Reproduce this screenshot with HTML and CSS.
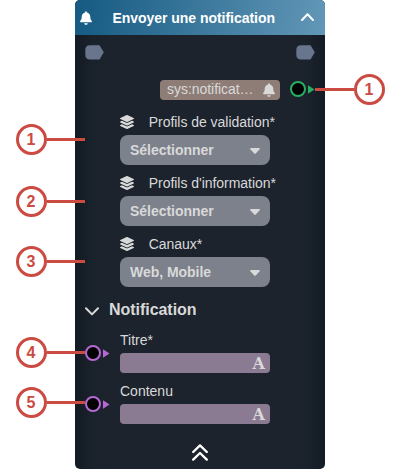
FILE: index.html
```html
<!DOCTYPE html>
<html lang="fr">
<head>
<meta charset="utf-8">
<title>Envoyer une notification</title>
<link rel="stylesheet" href="styles.css">
</head>
<body>
<svg class="defs" width="0" height="0" aria-hidden="true">
  <symbol id="bell" viewBox="0 0 448 512"><path d="M224 512c35.32 0 63.97-28.65 63.97-64H160.03c0 35.35 28.65 64 63.97 64zm215.39-149.71c-19.32-20.76-55.47-51.99-55.47-154.29 0-77.7-54.48-139.9-127.94-155.16V32c0-17.67-14.32-32-31.98-32s-31.98 14.33-31.98 32v20.84C118.56 68.1 64.08 130.3 64.08 208c0 102.3-36.15 133.53-55.47 154.29-6 6.45-8.66 14.16-8.61 21.71.11 16.4 12.98 32 32.1 32h383.8c19.12 0 32-15.6 32.1-32 .05-7.55-2.61-15.27-8.61-21.71z"/></symbol>
  <symbol id="layers" viewBox="0 0 512 512"><path d="M12.41 148.02l232.94 105.67c6.8 3.09 14.49 3.09 21.29 0l232.94-105.67c16.55-7.51 16.55-32.52 0-40.03L266.65 2.31a25.607 25.607 0 0 0-21.29 0L12.41 107.98c-16.55 7.51-16.55 32.53 0 40.04zm487.18 88.28l-58.09-26.33-161.64 73.27c-7.56 3.43-15.59 5.17-23.86 5.17s-16.29-1.74-23.86-5.17L70.51 209.97l-58.1 26.33c-16.55 7.5-16.55 32.5 0 40l232.94 105.59c6.8 3.08 14.49 3.08 21.29 0L499.59 276.3c16.55-7.5 16.55-32.5 0-40zm0 127.8l-57.87-26.23-161.86 73.37c-7.56 3.43-15.59 5.17-23.86 5.17s-16.29-1.74-23.86-5.17L70.29 337.87 12.41 364.1c-16.55 7.5-16.55 32.5 0 40l232.94 105.59c6.8 3.08 14.49 3.08 21.29 0L499.59 404.1c16.55-7.5 16.55-32.5 0-40z"/></symbol>
  <symbol id="flow" viewBox="0 0 19 15"><path d="M5 0.3H14.5L18.8 7.2L14.5 14.5H5Q.3 14.5 .3 9.8V5Q.3 .3 5 .3Z"/></symbol>
  <symbol id="pin" viewBox="0 0 25 16"><circle class="pin-ring" cx="8" cy="8" r="7"/><path d="M18 4.3L24.5 8.5L18 12.7Z"/></symbol>
  <symbol id="caret" viewBox="0 0 10 6"><path d="M.8 0H9.2Q10.4 .3 9.6 1.3L5.8 5.5Q5 6.2 4.2 5.5L.4 1.3Q-.4 .3 .8 0Z"/></symbol>
</svg>

<main class="stage">
  <section class="node">
    <header class="node-header">
      <svg class="header-bell"><use href="#bell"/></svg>
      <h1>Envoyer une notification</h1>
      <svg class="header-chevron" viewBox="0 0 13 8"><path d="M1 7L6.5 1.3L12 7"/></svg>
    </header>

    <div class="flow-row">
      <svg class="flow"><use href="#flow"/></svg>
      <svg class="flow"><use href="#flow"/></svg>
    </div>

    <div class="output-row">
      <div class="output"><span>sys:notificat…</span><svg class="output-bell"><use href="#bell"/></svg></div>
      <svg class="pin pin-out"><use href="#pin"/></svg>
    </div>

    <div class="selects">
      <div class="field">
        <div class="field-label"><svg class="layers"><use href="#layers"/></svg>Profils de validation*</div>
        <div class="select">Sélectionner<svg class="caret"><use href="#caret"/></svg></div>
      </div>
      <div class="field">
        <div class="field-label"><svg class="layers"><use href="#layers"/></svg>Profils d'information*</div>
        <div class="select">Sélectionner<svg class="caret"><use href="#caret"/></svg></div>
      </div>
      <div class="field">
        <div class="field-label"><svg class="layers"><use href="#layers"/></svg>Canaux*</div>
        <div class="select">Web, Mobile<svg class="caret"><use href="#caret"/></svg></div>
      </div>
    </div>

    <div class="section-title">
      <svg class="section-chevron" viewBox="0 0 14 9"><path d="M1 1.2L7 7.4L13 1.2"/></svg>
      <h2>Notification</h2>
    </div>

    <div class="inputs">
      <div class="text-field">
        <label>Titre*</label>
        <div class="input-row"><svg class="pin pin-in"><use href="#pin"/></svg><div class="input">A</div></div>
      </div>
      <div class="text-field">
        <label>Contenu</label>
        <div class="input-row"><svg class="pin pin-in"><use href="#pin"/></svg><div class="input">A</div></div>
      </div>
    </div>

    <svg class="collapse" viewBox="0 0 16 17"><path d="M1.2 8L8 1.4L14.8 8M1.2 15.6L8 9L14.8 15.6"/></svg>
  </section>

  <div class="callout callout-1"><b>1</b><i></i></div>
  <div class="callout callout-2"><b>2</b><i></i></div>
  <div class="callout callout-3"><b>3</b><i></i></div>
  <div class="callout callout-4"><b>4</b><i></i></div>
  <div class="callout callout-5"><b>5</b><i></i></div>
  <div class="callout callout-out"><i></i><b>1</b></div>
</main>
</body>
</html>
```

FILE: styles.css
```css
* { box-sizing: border-box; }

body {
  margin: 0;
  background: #fff;
  font-family: "Liberation Sans", Arial, sans-serif;
  font-size: 14px;
  color: #d9d9d9;
}

svg { display: block; flex: none; fill: currentColor; }
.defs { position: absolute; }

.stage {
  position: relative;
  width: 400px;
  height: 469px;
  overflow: hidden;
}

.node {
  width: 250px;
  height: 469px;
  margin-left: 75px;
  border-radius: 5px;
  overflow: hidden;
  background: linear-gradient(90deg, #131a22 0, #1a222c 18px, #1c232d 36px, #1c232d 214px, #1a222c 232px, #141b24 100%);
}

.node-header {
  display: flex;
  align-items: center;
  height: 35px;
  padding: 0 11px 0 5px;
  color: #fff;
  background: linear-gradient(100deg, #155a82, #6297b7);
}
.header-bell { width: 12px; height: 14px; margin-top: 1px; }
.node-header h1 {
  flex: 1;
  margin: 0 0 0 20.4px;
  font-size: 14px;
  line-height: 16px;
  letter-spacing: -.03px;
  white-space: nowrap;
}
.header-chevron { width: 13px; height: 8px; margin-top: -1px; }
.header-chevron path,
.section-chevron path,
.collapse path {
  fill: none;
  stroke: currentColor;
  stroke-width: 2;
  stroke-linecap: round;
  stroke-linejoin: round;
}

.flow-row {
  display: flex;
  justify-content: space-between;
  padding: 10px 10px 0;
  color: #69748d;
}
.flow { width: 19px; height: 15px; }

.output-row {
  display: flex;
  align-items: center;
  justify-content: flex-end;
  gap: 10px;
  height: 20px;
  margin-top: 20px;
  padding-right: 10px;
}
.output {
  display: flex;
  align-items: center;
  justify-content: space-between;
  width: 120px;
  height: 20px;
  padding: 0 5px 0 7px;
  border-radius: 4px;
  background: #8e7d76;
}
.output span { line-height: 18px; padding-bottom: 2px; letter-spacing: -.04px; }
.output-bell { width: 12px; height: 14px; }

.pin { width: 25px; height: 16px; margin-top: -2px; }
.pin-ring { fill: #000; stroke: currentColor; stroke-width: 2; }
.pin-out { color: #27ae60; }
.pin-in { color: #b768d6; margin-top: -8px; }

.selects { padding: 12px 0 0 45px; }
.field { height: 61px; }
.field-label {
  display: flex;
  align-items: center;
  gap: 14.7px;
  height: 20px;
  margin-bottom: 3px;
  letter-spacing: -.03px;
  white-space: nowrap;
}
.layers { width: 14px; height: 14px; }
.select {
  display: flex;
  align-items: center;
  justify-content: space-between;
  width: 150px;
  height: 30px;
  padding: 0 10px;
  border-radius: 8px;
  background: #7d818c;
  font-weight: bold;
  letter-spacing: -.03px;
}
.caret { width: 10px; height: 6px; margin-top: 2px; }

.section-title {
  display: flex;
  align-items: center;
  gap: 10px;
  height: 20px;
  margin-top: 5px;
  padding-left: 10px;
}
.section-chevron { width: 14px; height: 9px; margin-top: 2px; }
.section-title h2 { margin: 0; font-size: 16px; line-height: 20px; letter-spacing: -.04px; }

.inputs { padding: 10px 0 0 10px; }
.text-field { height: 51px; }
.text-field label {
  display: block;
  height: 20px;
  margin: 0 0 3px 35px;
  line-height: 20px;
}
.input-row { display: flex; gap: 10px; }
.input {
  width: 150px;
  height: 20px;
  padding-right: 5px;
  border-radius: 4px;
  background: #8b7b92;
  font: bold 16px/22px "DejaVu Serif", serif;
  text-align: right;
}

.collapse { width: 16px; height: 17px; margin: 12px auto 0; color: #fff; }
.collapse path { stroke-width: 2.3; }

/* Numbered markers laid over the node */
.callout {
  position: absolute;
  left: 15.5px;
  display: flex;
  align-items: center;
  color: #cb4a41;
}
.callout b {
  width: 31px;
  height: 31px;
  border: 3px solid currentColor;
  border-radius: 50%;
  background: #fff;
  font-size: 16px;
  line-height: 25px;
  text-align: center;
}
.callout i { width: 38.5px; height: 3px; background: currentColor; }
.callout-1 { top: 123.5px; }
.callout-2 { top: 185.5px; }
.callout-3 { top: 245.5px; }
.callout-4 { top: 337.4px; }
.callout-5 { top: 387.4px; }
.callout-out { top: 73.5px; left: 315px; }
```
